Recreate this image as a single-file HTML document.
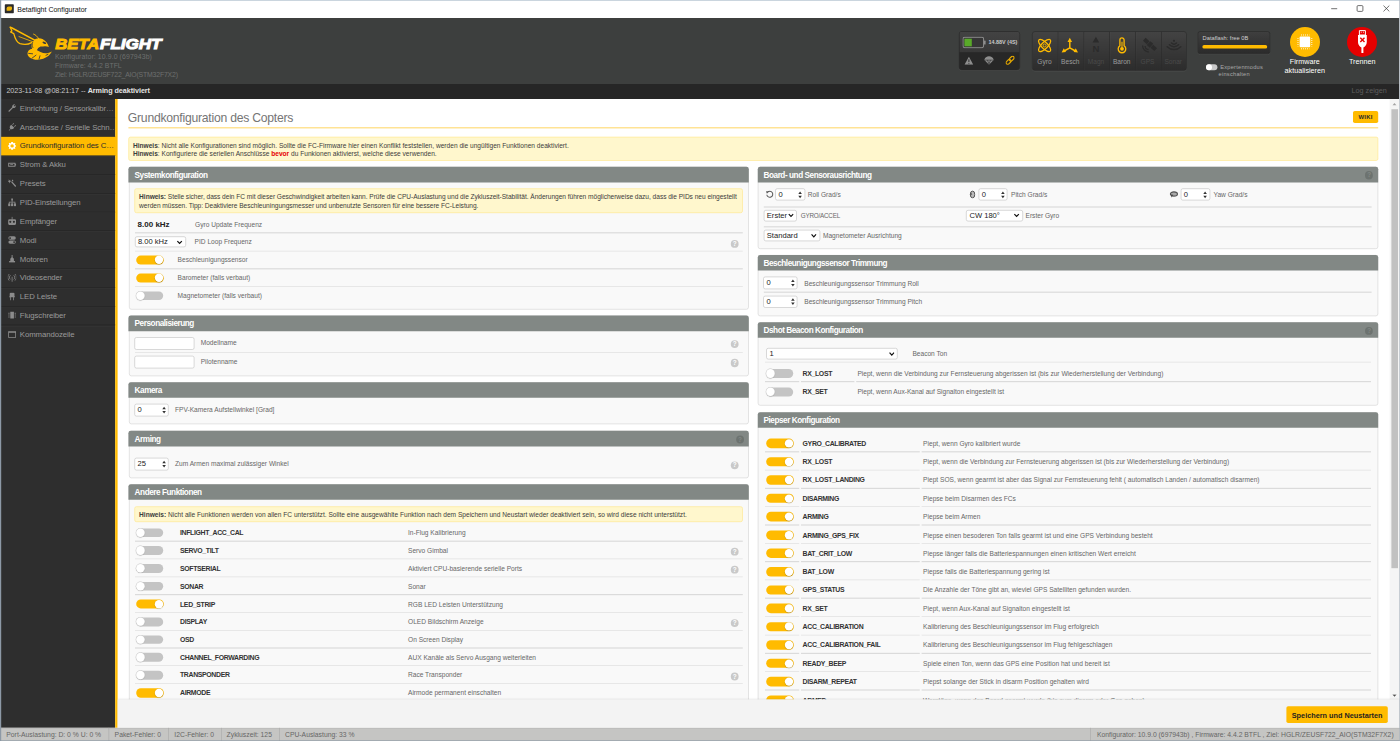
<!DOCTYPE html>
<html lang="de"><head><meta charset="utf-8"><title>Betaflight Configurator</title>
<style>
body{margin:0;background:#fff;overflow:hidden;width:1400px;height:741px;position:relative}
#w{position:absolute;left:0;top:0;width:2333.333px;height:1235px;transform:scale(.6);transform-origin:0 0;font-family:"Liberation Sans",sans-serif;overflow:hidden;background:#fff;font-size:12px;color:#3f3f3f}
#w *{box-sizing:border-box}
#w div,#w span,#w i,#w svg,#w p{position:absolute;margin:0;padding:0;white-space:nowrap}
#w b{font-weight:bold}
/* window frame */
#tb{left:0;top:0;width:2333.333px;height:30px;background:#fff}
#tb .edge{left:0;top:0;width:2333.333px;height:1.333px;background:#a7b9c8}
#tb .ico{left:8.333px;top:7.333px;width:14.333px;height:14.333px;background:#2b2b2b;border-radius:1.333px}
#tb .ico i{left:2.667px;top:3.333px;width:9px;height:7px;background:#e9b20c;border-radius:3.333px 1.667px 3.333px 1px}
#tb .cap{left:28.833px;top:7.667px;font-size:11.667px;line-height:15px;color:#111}
#tb svg{top:0;height:30px;width:33.333px}
#lb,#rb{top:0;width:1.667px;height:1235px;background:#8d99a6}
#lb{left:0;width:1.5px}#rb{left:2331.5px;width:1.833px}
#bb{left:0;top:1233.833px;width:2333.333px;height:1.167px;background:#8d99a6}
/* header */
#hd{left:1.333px;top:30px;width:2331px;height:110px;background:#3d3f3e}
#logo{left:14px;top:13.667px;width:73.333px;height:58.333px}
#brand{left:88.333px;top:26.667px;width:186.667px;height:33.333px}
.inf{left:90.333px;font-size:11.5px;line-height:15px;color:#6d6f6e}
#log{left:1.333px;top:140px;width:2331px;height:25px;background:#262626;color:#c8c8c8;font-size:12px}
#log .l{letter-spacing:-0.083px;left:9.333px;top:4px;line-height:15px}
#log .l b{color:#e4e4e4}
#log .r{right:21px;top:4px;line-height:15px;color:#5d5d5d}
.qs{left:1596.667px;top:22.333px;width:102.333px;height:64.333px;border-radius:5px;background:#272727;box-shadow:0 1px 0 rgba(92,92,92,.5);overflow:hidden;border:1px solid #2c2c2c}
.qs .top{left:0;top:0;width:103.333px;height:34px;background:linear-gradient(#434343,#383838)}
.qs .v{left:48.667px;top:11.333px;font-size:9px;line-height:11.667px;color:#c9c9c9;font-weight:bold}
.ss{left:1718.667px;top:22.333px;width:258.333px;height:66px;border-radius:5px;background:linear-gradient(#434343,#2c2c2c);box-shadow:0 1px 0 rgba(92,92,92,.5);border:1px solid #2a2a2a;overflow:hidden}
.ss .c{top:0;width:42.917px;height:65px;border-right:1.167px solid #2b2b2b;box-shadow:inset 1px 0 0 rgba(255,255,255,.04)}
.ss .c span{left:-1px;width:41.667px;text-align:center;top:43.667px;font-size:11px;line-height:13.333px;color:#9c9c9c}
.ss .c.off span{color:#4a4a4a}
.ss .c svg{left:-1px;top:-1px;width:42.917px;height:40px}
.df{left:1995px;top:22px;width:121px;height:37.667px;border-radius:4.333px;background:linear-gradient(#3f3f3f,#2b2b2b);border:1px solid #272727;box-shadow:0 1px 0 rgba(92,92,92,.5)}
.df span{left:7px;top:4.333px;font-size:9.5px;line-height:11.667px;color:#d0d0d0}
.df i{left:6.5px;top:22.167px;width:108.333px;height:5.667px;border-radius:2.833px;background:#ffbb00}
.ex{left:2008.333px;top:77px;width:19px;height:10px;border-radius:5px;background:#c9c9c9}
.ex i{left:0;top:0;width:10px;height:10px;border-radius:50%;background:#fff}
.ext{letter-spacing:0.367px;font-size:9.5px;line-height:11.667px;color:#a9a9a9}
.cb{width:50px;height:50px;border-radius:50%;top:14.5px}
.cbt{font-size:12px;line-height:15px;color:#fff;text-align:center;width:133.333px}
/* sidebar */
#sb{left:1.333px;top:165px;width:191px;height:1048.333px;background:#2e2e2e}
#sb .t{left:0;width:191.667px;height:31.417px;border-bottom:1.167px solid #242424;box-shadow:inset 0 1px 0 rgba(255,255,255,.04);color:#9a9a9a;font-size:13px}
#sb .t span{letter-spacing:-0.167px;left:31.667px;top:7.167px;line-height:16.667px}
#sb .t svg{left:11.667px;top:7.333px;width:14.333px;height:14.333px;fill:#8c8c8c;stroke:none}
#sb .t.a{background:#ffbb00;color:#2b2b2b;box-shadow:none;border-bottom-color:#2a2a2a}
#sb .t.a svg{fill:#fff}
#sb .t:last-child{border-bottom-color:transparent}
#ys{left:191.833px;top:165px;width:4.167px;height:1048.333px;background:#ffbb00}
/* content */
#content{left:0;top:0;width:2333.333px;height:1165.667px;overflow:hidden}
.ttl{left:213px;top:184.333px;font-size:20.333px;letter-spacing:-0.417px;line-height:25px;color:#757575}
.ttlu{left:213.667px;top:211.833px;width:2083.333px;height:2.167px;background:#ffdc7c}
.wiki{left:2254.833px;top:185.167px;width:42px;height:19.667px;border-radius:3px;background:#ffbb00;color:#2a2a2a;font-weight:bold;font-size:9.833px;line-height:19.667px;text-align:center;letter-spacing:0.417px}
.note{background:#fff7cd;border:1.167px solid #ffe588;border-radius:3.333px;font-size:11px;color:#3c3c3c}
.note p{left:7px;line-height:14.333px}
.note p:nth-child(1){top:5.667px}.note p:nth-child(2){top:20.167px}
.red{color:#e60000}
.gb{background:#f9f9f9;border:1.167px solid #d2d2d2;border-radius:4px}
.gt{left:-1.167px;top:-1.167px;right:-1.167px;height:26px;border-radius:4px 4px 0 0;background:#828885;color:#fff;font-weight:bold;font-size:13.667px;letter-spacing:-0.75px;line-height:27px;padding-left:10px !important}
.sp{height:1.5px;background:#dbdbdb}
.lb{font-size:11px;line-height:20px;color:#676767}
.lb.bd{font-size:11.5px;font-weight:bold;color:#333;letter-spacing:-0.567px}
.lb.sm{font-size:10.5px;letter-spacing:-0.333px}
.khz{font-size:13.333px;font-weight:bold;line-height:20px;color:#222}
.tg{width:46px;height:15.667px;border-radius:7.833px}
.tg.on{background:#ffbb00}
.tg.off{background:#c4c4c4;width:45px;height:14.667px;margin-top:0.5px !important}
.tg i{top:0.833px;width:14px;height:14px;border-radius:50%;background:#fff;box-shadow:0 0.667px 1.667px rgba(0,0,0,.35)}
.tg.on i{right:0.833px}
.tg.off i{left:0.167px;top:0.167px;width:14.333px;height:14.333px;box-shadow:0 0 0 0.833px #c9c9c9,0 0.833px 1.667px rgba(0,0,0,.3)}
.hp{width:13.333px;height:13.333px;border-radius:50%;background:#c9c9c9;color:#fff;font-weight:bold;font-size:10.667px;line-height:13.667px;text-align:center}
.hp.dk{background:#6d7370;color:#838986}
.num,.sel,.txt{background:#fff;border:1.167px solid #bfbfbf;border-radius:3.333px}
#w .num b,#w .sel b{position:absolute;font-weight:normal;font-size:12.667px;color:#222;left:4.333px;top:0;line-height:100%;height:100%;display:flex;align-items:center}
.num svg{right:2.333px;top:50%;margin-top:-7.667px !important;width:9px;height:15.333px;fill:#333}
.sel svg{right:4px;top:50%;margin-top:-3.667px !important;width:10.667px;height:8px;fill:none;stroke:#111;stroke-width:1.5}
/* footer */
#tbar{left:196px;top:1165.667px;width:2136.667px;height:47.667px;background:#f3f3f3;box-shadow:0 -1px 3.333px rgba(0,0,0,.1)}
#save{left:1948px;top:11.5px;width:169.167px;height:27.833px;border-radius:3px;background:#ffbb00;color:#1f1f1f;font-weight:bold;font-size:12.167px;line-height:30px;text-align:center}
#st{left:0;top:1213.333px;width:2333.333px;height:21.667px;background:#c5c5c3;color:#666;font-size:11.333px;box-shadow:inset 0 1px 0 #b5b5b5}
#st span{top:4.333px;line-height:15px}
#st i{top:0;width:1.167px;height:21.667px;background:#a9a9a9}
#scr{left:2316.167px;top:165px;width:15.833px;height:1000.667px;background:#f5f5f5}
#scr i{left:2.5px;top:16.667px;width:11.667px;height:765px;background:#c1c1c1}
#scr svg{left:4.167px;width:8.333px;height:5px}

</style></head>
<body>
<div id="w">
<div id="tb"><i class="edge"></i><span class="ico"><i></i></span><span class="cap">Betaflight Configurator</span>
<svg style="left:2206.667px" viewBox="0 0 20 18"><path d="M7 8.7H13" stroke="#333" stroke-width=".7"/></svg>
<svg style="left:2250px" viewBox="0 0 20 18"><rect x="7.1" y="5.6" width="5.8" height="5.8" rx="1" fill="none" stroke="#333" stroke-width=".7"/></svg>
<svg style="left:2293.833px" viewBox="0 0 20 18"><path d="M7.1 5.6L12.9 11.4M12.9 5.6L7.1 11.4" stroke="#333" stroke-width=".7"/></svg>
</div>
<div id="hd">
<svg id="logo" viewBox="0 0 44 35"><g fill="none" stroke="#ffbb00" stroke-linecap="round" stroke-linejoin="round"><path d="M1.2 0.6 L26.6 14.3" stroke-width="1.5"/><path d="M1.2 .6 L2.9 4.6 L1.6 5.6 L4.8 7.2 C6 12 8 16 11 17.2 C14.5 18.2 19.5 18 22.6 16.2" stroke-width="1.3"/><path d="M10 10.2 L24 15.4" stroke-width=".8"/><path d="M29.6 12.2 C28.2 9.8 26.6 8.5 24.6 7.7" stroke-width=".9"/></g>
<g fill="#ffbb00"><path d="M25 14.2 C26.5 11.7 30.5 11.2 33.5 12.7 C36.5 14.2 39 17.2 39.9 20.5 C37.5 19.4 34.5 19.8 31.5 20.2 C28.5 21.7 27 23.2 26 24.8 L22.8 21.8 C22 18.4 23 15.8 25 14.2Z"/><path d="M22 22.7 C25.5 22.2 28.5 23.7 31.5 25.7 C35.5 27.7 39.5 27.2 42.8 25.2 C41 29.2 36.5 32.7 29.5 33.4 C23.5 33.8 19 31.2 18.5 27.7 C18.3 25.2 20 23.2 22 22.7Z"/></g>
<path d="M23 20.500 C25 19.500 27.500 20 29 21.500 L27.500 24.500 L23.500 23.500Z" fill="#ffbb00"/><g stroke="#3d3f3e" stroke-width=".9" fill="none" stroke-linecap="round"><path d="M19.6 27 L23.6 27.4"/><path d="M23 31.8 L27 28.8"/><path d="M30 32.8 L31 29.4"/><path d="M37 28.9 L39 27.9"/><path d="M23.6 16.2 C22.9 18 23.1 19.8 23.9 21.2" stroke-width=".8"/></g>
<ellipse cx="35.3" cy="16.4" rx="2" ry=".95" transform="rotate(25 35.3 16.4)" fill="#3d3f3e"/></svg>
<svg id="brand" viewBox="0 0 112 20"><text x="1.2" y="15.2" font-family="Liberation Sans, sans-serif" font-weight="bold" font-style="italic" font-size="15.2" fill="#ffbb00" stroke="#ffbb00" stroke-width="1" textLength="44" lengthAdjust="spacingAndGlyphs">BETA</text><text x="46" y="15.2" font-family="Liberation Sans, sans-serif" font-weight="bold" font-style="italic" font-size="15.2" fill="#fff" stroke="#fff" stroke-width="1" textLength="61.5" lengthAdjust="spacingAndGlyphs">FLIGHT</text></svg>
<span class="inf" style="top:57.167px;letter-spacing:0.167px">Konfigurator: 10.9.0 (697943b)</span>
<span class="inf" style="top:72px">Firmware: 4.4.2 BTFL</span>
<span class="inf" style="top:87.167px;letter-spacing:-0.317px">Ziel: HGLR/ZEUSF722_AIO(STM32F7X2)</span>
<div class="qs"><i class="top"></i>
<svg style="left:5.333px;top:7.667px;width:40px;height:20px" viewBox="0 0 24 12"><rect x=".6" y=".7" width="20.6" height="10.4" rx="1.6" fill="#363636" stroke="#8f8f8f" stroke-width="1"/><rect x="21.6" y="4" width="1.6" height="4" rx=".6" fill="#8f8f8f"/><rect x="2" y="2.1" width="7.4" height="7.6" fill="#59aa29"/></svg>
<span class="v">14.88V (4S)</span>
<svg style="left:7.667px;top:40.333px;width:15.667px;height:14.333px" viewBox="0 0 10 9"><path d="M5 .3 L9.7 8.7 H.3Z" fill="#8e8e8e"/><path d="M5 3V6M5 7V7.8" stroke="#272727" stroke-width="1"/></svg>
<svg style="left:41.333px;top:39.333px;width:16.667px;height:15.667px" viewBox="0 0 10.4 9.6"><path d="M.4 4.2 C.8 1.6 2.8 .4 5.2 .4 C7.6 .4 9.6 1.6 10 4.2 L5.2 9.3Z" fill="#8e8e8e"/><path d="M1.2 4.4 H9.2 M3.6 4.4 L5.2 8.4 L6.8 4.4" stroke="#272727" stroke-width=".6" fill="none"/></svg>
<svg style="left:77.333px;top:40px;width:15px;height:15px" viewBox="0 0 10 10"><g fill="none" stroke="#e3a700" stroke-width="1.35" transform="rotate(-45 5 5)"><rect x="-.6" y="3.2" width="6.2" height="3.6" rx="1.8"/><rect x="4.4" y="3.2" width="6.2" height="3.6" rx="1.8"/></g></svg>
</div>
<div class="ss">
<div class="c" style="left:0"><svg viewBox="0 0 25.75 24"><g fill="none" stroke="#ffbb00" stroke-width="1.3"><ellipse cx="12.600" cy="14.300" rx="8" ry="3.100" transform="rotate(45 12.600 14.300)"/><ellipse cx="12.600" cy="14.300" rx="8" ry="3.100" transform="rotate(-45 12.600 14.300)"/><circle cx="12.600" cy="14.300" r="1.500" stroke-width=".9"/></g></svg><span>Gyro</span></div>
<div class="c" style="left:42.917px"><svg viewBox="0 0 25.75 24"><path d="M12 16.600 V10 M12 16.600 L6.400 19.800 M12 16.600 L17.600 19.800" fill="none" stroke="#ffbb00" stroke-width="1.500"/><path d="M12 6.600 L14.300 10.800 H9.700Z M3.800 21.300 L6 17 L8.200 20.900Z M20.200 21.300 L18 17 L15.800 20.900Z" fill="#ffbb00"/></svg><span>Besch</span></div>
<div class="c off" style="left:85.833px"><svg viewBox="0 0 25.75 24"><path d="M12.300 5.600 L15.600 11.400 H9Z" fill="#2b2b2b"/><text x="12.400" y="21.200" text-anchor="middle" font-family="Liberation Sans, sans-serif" font-weight="bold" font-size="9.600" fill="#2b2b2b">N</text></svg><span>Magn</span></div>
<div class="c" style="left:128.75px"><svg viewBox="0 0 25.75 24"><path d="M10.500 8.800 A2.100 2.100 0 0 1 14.700 8.800 V14.600 A3.800 3.800 0 1 1 10.500 14.600Z" fill="none" stroke="#ffbb00" stroke-width="1.300"/><circle cx="12.600" cy="17.600" r="1.900" fill="#ffbb00"/><path d="M12.600 17V10.500" stroke="#ffbb00" stroke-width="1.100"/></svg><span>Baron</span></div>
<div class="c off" style="left:171.667px"><svg viewBox="0 0 25.75 24"><g fill="#2b2b2b" transform="rotate(42 14.500 13)"><rect x="7.200" y="11" width="5.200" height="4"/><rect x="12.900" y="10.400" width="4" height="5.200"/><rect x="17.400" y="11" width="5.200" height="4"/></g><g fill="none" stroke="#2b2b2b" stroke-width="1.300"><path d="M7.400 14.400 A6.400 6.400 0 0 0 13.600 20.800"/><path d="M9.900 14.800 A3.800 3.800 0 0 0 13.400 18.400"/></g></svg><span>GPS</span></div>
<div class="c off" style="left:214.583px;border-right:0"><svg viewBox="0 0 25.75 24"><g fill="none" stroke="#2b2b2b" stroke-width="1.500" stroke-linecap="round"><path d="M6.200 15.600 A9.600 9.600 0 0 0 19.800 15.600"/><path d="M8.400 13.600 A6.500 6.500 0 0 0 17.600 13.600"/><path d="M10.500 11.800 A3.600 3.600 0 0 0 15.500 11.800"/></g><circle cx="13" cy="9.600" r="1.100" fill="#2b2b2b"/></svg><span>Sonar</span></div>
</div>
<div class="df"><span>Dataflash: free 0B</span><i></i></div>
<span class="ex"><i></i></span>
<span class="ext" style="left:2032.333px;top:75.667px">Expertenmodus</span>
<span class="ext" style="left:2029.667px;top:87.333px">einschalten</span>
<span class="cb" style="left:2148.333px;background:#ffbb00"></span>
<svg style="left:2157.667px;top:23.667px;width:31.667px;height:31.667px" viewBox="0 0 19 19"><rect x="4.200" y="4.200" width="10.600" height="10.600" rx="1" fill="#fff"/><g stroke="#fff" stroke-width="1" stroke-dasharray=".9 1.1"><path d="M5.600 2.600H14 M5.600 16.400H14 M2.600 5.600V14 M16.400 5.600V14"/></g></svg>
<span class="cbt" style="left:2106.667px;top:65.333px">Firmware</span><span class="cbt" style="left:2106.667px;top:80.333px">aktualisieren</span>
<span class="cb" style="left:2244px;background:#e60000"></span>
<svg style="left:2257.333px;top:19.333px;width:23.333px;height:41.667px" viewBox="0 0 14 25"><path d="M4 1.200H10V5.600H4Z" fill="none" stroke="#fff" stroke-width="1"/><path d="M2.600 5.600H11.400V12.600C11.400 15.600 9.600 17.200 8 18V23.600H6V18C4.400 17.200 2.600 15.600 2.600 12.600Z" fill="#fff"/><path d="M4.900 8.300L9.100 12.500M9.100 8.300L4.900 12.500" stroke="#e60000" stroke-width="1.4"/><path d="M5.400 2.800H6.400M7.600 2.800H8.600" stroke="#fff" stroke-width=".8"/></svg>
<span class="cbt" style="left:2202.333px;top:65.333px">Trennen</span>
</div>
<div id="log"><span class="l">2023-11-08 @08:21:17 -- <b>Arming deaktiviert</b></span><span class="r">Log zeigen</span></div>

<div id="sb">
<div class="t" style="top:0.5px"><svg viewBox="0 0 9 9"><path d="M.8 7.400 L4.600 3.600 A2.400 2.400 0 0 1 7.600 .7 L6.200 2.100 L6.900 2.800 L8.300 1.400 A2.400 2.400 0 0 1 5.400 4.400 L1.600 8.200 A.57 .57 0 0 1 .8 7.400Z"/></svg><span>Einrichtung / Sensorkalibr…</span></div>
<div class="t" style="top:31.917px"><svg viewBox="0 0 9 9"><path d="M1 8.400 L2.600 6.400 C1.600 5.200 2 4 2.800 3.200 L3.600 2.400 L6.800 5.600 L6 6.400 C5 7.400 3.800 7.400 3 6.800 L1.400 8.800Z M4.600 2.200 L6 .6 L6.600 1.200 L5.200 2.800Z M6.600 4.200 L8 2.600 L8.600 3.200 L7.200 4.800Z"/></svg><span>Anschlüsse / Serielle Schn…</span></div>
<div class="t a" style="top:63.333px"><svg viewBox="0 0 9 9"><path fill-rule="evenodd" d="M4.500 .3 L5.400 .400 L5.700 1.400 L6.500 1.800 L7.400 1.300 L8 2 L7.500 2.900 L7.800 3.700 L8.800 4 V5 L7.800 5.300 L7.500 6.100 L8 7 L7.400 7.700 L6.500 7.200 L5.700 7.600 L5.400 8.600 H3.600 L3.300 7.600 L2.500 7.200 L1.600 7.700 L1 7 L1.500 6.100 L1.200 5.300 L.2 5 V4 L1.200 3.700 L1.500 2.900 L1 2 L1.600 1.300 L2.500 1.800 L3.300 1.400 L3.600 .4Z M4.500 2.700 A1.800 1.800 0 1 0 4.500 6.300 A1.800 1.800 0 1 0 4.500 2.700Z"/></svg><span>Grundkonfiguration des C…</span></div>
<div class="t" style="top:94.75px"><svg viewBox="0 0 9 9"><path fill-rule="evenodd" d="M.4 2.600 H8 V3.800 H8.800 V5.600 H8 V6.800 H.4Z M1.400 3.600 V5.800 H7 V3.600Z M2.600 4.300 H5.400 V5.100 H2.600Z"/></svg><span>Strom & Akku</span></div>
<div class="t" style="top:126.167px"><svg viewBox="0 0 9 9"><path d="M3.400 3.400 L4.400 2.600 L8.800 7.600 L7.800 8.600Z M1 .6 L1.800 1.800 L3 1 L2.400 2.400 L3.600 3.200 L2.200 3.400 L1.800 4.800 L1.200 3.400 L0 3.400 L.9 2.500Z M5 .4 L5.400 1.200 L6.200 1.400 L5.500 1.900 L5.600 2.700 L5 2.200 L4.200 2.600 L4.500 1.800 L4 1.200 L4.800 1.200Z"/></svg><span>Presets</span></div>
<div class="t" style="top:157.583px"><svg viewBox="0 0 9 9"><path d="M3.600 .4 H5.400 V2.600 H4.900 V3.900 H7.900 V5.800 H8.600 V8.600 H6.400 V5.800 H7.100 V4.700 H4.900 V5.800 H5.600 V8.600 H3.400 V5.800 H4.100 V4.700 H1.900 V5.800 H2.600 V8.600 H.4 V5.800 H1.100 V3.900 H4.100 V2.600 H3.600Z"/></svg><span>PID-Einstellungen</span></div>
<div class="t" style="top:189px"><svg viewBox="0 0 9 9"><path fill-rule="evenodd" d="M4.100 .2 H4.900 V2.800 H7.400 A1.200 1.200 0 0 1 8.600 4 V7.600 A1.200 1.200 0 0 1 7.400 8.800 H1.600 A1.200 1.200 0 0 1 .4 7.600 V4 A1.200 1.200 0 0 1 1.600 2.800 H4.100Z M2.600 4.400 A1.100 1.100 0 1 0 2.600 6.600 A1.100 1.100 0 1 0 2.600 4.400Z M6.400 4.400 A1.100 1.100 0 1 0 6.400 6.600 A1.100 1.100 0 1 0 6.400 4.400Z"/></svg><span>Empfänger</span></div>
<div class="t" style="top:220.417px"><svg viewBox="0 0 9 9"><path fill-rule="evenodd" d="M2.400 .6 H6.600 A1.800 1.800 0 0 1 6.600 4.200 H2.400 A1.800 1.800 0 0 1 2.400 .6Z M2.400 1.400 A1 1 0 1 0 2.400 3.400 A1 1 0 1 0 2.400 1.400Z M2.400 4.800 H6.600 A1.800 1.800 0 0 1 6.600 8.400 H2.400 A1.800 1.800 0 0 1 2.400 4.800Z M6.600 5.600 A1 1 0 1 0 6.600 7.600 A1 1 0 1 0 6.600 5.600Z"/></svg><span>Modi</span></div>
<div class="t" style="top:251.833px"><svg viewBox="0 0 9 9"><path d="M4 .6 H5 V3 L6.400 4.600 V7 H7.600 V8.600 H1.400 V7 H2.600 V4.600 L4 3Z"/></svg><span>Motoren</span></div>
<div class="t" style="top:283.25px"><svg viewBox="0 0 9 9"><path d="M4.100 3.400 H4.900 V8.600 H4.100Z" /><path d="M2.800 1.800 A2.600 2.600 0 0 0 2.800 6 M6.200 1.800 A2.600 2.600 0 0 1 6.200 6 M1.400 .6 A4.400 4.400 0 0 0 1.400 7.200 M7.600 .6 A4.400 4.400 0 0 1 7.600 7.200" fill="none" stroke="#9a9a9a" stroke-width=".8"/></svg><span>Videosender</span></div>
<div class="t" style="top:314.667px"><svg viewBox="0 0 9 9"><path d="M3 .6 H6 A1 1 0 0 1 7 1.600 V4.400 H7.600 V5.400 H6.400 V8.600 H5.600 V5.400 H3.400 V8.600 H2.600 V5.400 H1.400 V4.400 H2 V1.600 A1 1 0 0 1 3 .6Z"/></svg><span>LED Leiste</span></div>
<div class="t" style="top:346.083px"><svg viewBox="0 0 9 9"><path d="M2.600 1 H6.400 V8 H2.600Z M.6 2 H1.800 V3 H.6Z M.6 4 H1.800 V5 H.6Z M.6 6 H1.800 V7 H.6Z M7.200 2 H8.400 V3 H7.200Z M7.200 4 H8.400 V5 H7.200Z M7.200 6 H8.400 V7 H7.200Z"/></svg><span>Flugschreiber</span></div>
<div class="t" style="top:377.5px"><svg viewBox="0 0 9 9"><path fill-rule="evenodd" d="M.4 1.200 H8.600 V8 H.4Z M1.200 3 V7.200 H7.800 V3Z"/></svg><span>Kommandozeile</span></div>
</div><i id="ys"></i>
<div id="content">
<div class="ttl">Grundkonfiguration des Copters</div><i class="ttlu"></i><span class="wiki">WIKI</span>
<div class="note" style="left:213.5px;top:228.167px;width:2083.333px;height:39.667px"><p><b>Hinweis</b>: Nicht alle Konfigurationen sind möglich. Sollte die FC-Firmware hier einen Konflikt feststellen, werden die ungültigen Funktionen deaktiviert.</p><p><b>Hinweis</b>: Konfiguriere die seriellen Anschlüsse <b class="red">bevor</b> du Funkionen aktivierst, welche diese verwenden.</p></div>
<div class="gb" style="left:214.5px;top:277.833px;width:1033.667px;height:237.833px"><div class="gt">Systemkonfiguration</div></div>
<div class="note" style="left:223.833px;top:314px;width:1014.333px;height:40.5px;letter-spacing:-0.057px"><p><b>Hinweis:</b> Stelle sicher, dass dein FC mit dieser Geschwindigkeit arbeiten kann. Prüfe die CPU-Auslastung und die Zykluszeit-Stabilität. Änderungen führen möglicherweise dazu, dass die PIDs neu eingestellt</p><p>werden müssen. Tipp: Deaktiviere Beschleuningungsmesser und unbenutzte Sensoren für eine bessere FC-Leistung.</p></div><span class="khz" style="left:229.333px;top:363.833px">8.00 kHz</span><span class="lb" style="left:325px;top:363.833px">Gyro Update Frequenz</span><i class="sp" style="left:224.5px;width:1013.667px;top:387.333px"></i><span class="sel" style="left:224.5px;top:394px;width:85px;height:18.333px"><b>8.00 kHz</b><svg viewBox="0 0 8 6"><path d="M1.2 1.3 L4 4.3 L6.8 1.3" /></svg></span><span class="lb" style="left:324.333px;top:393.333px">PID Loop Frequenz</span><span class="hp " style="left:1217.833px;top:400px">?</span><i class="sp" style="left:224.5px;width:1013.667px;top:417.5px"></i><span class="tg on" style="left:226.833px;top:425.5px"><i></i></span><span class="lb" style="left:296px;top:423.333px">Beschleunigungssensor</span><i class="sp" style="left:224.5px;width:1013.667px;top:447.333px"></i><span class="tg on" style="left:226.833px;top:455.5px"><i></i></span><span class="lb" style="left:296px;top:453.333px">Barometer (falls verbaut)</span><i class="sp" style="left:224.5px;width:1013.667px;top:476.5px"></i><span class="tg off" style="left:226.833px;top:485px"><i></i></span><span class="lb" style="left:296px;top:482.833px">Magnetometer (falls verbaut)</span>
<div class="gb" style="left:214.5px;top:525.667px;width:1033.667px;height:101.167px"><div class="gt">Personalisierung</div></div>
<span class="txt" style="left:223.833px;top:561.833px;width:100.667px;height:20.833px"></span><span class="lb" style="left:334.5px;top:561px">Modellname</span><span class="hp " style="left:1217.833px;top:566.667px">?</span><i class="sp" style="left:224.5px;width:1013.667px;top:586.5px"></i><span class="txt" style="left:223.833px;top:593.333px;width:100.667px;height:20.5px"></span><span class="lb" style="left:334.5px;top:592.333px">Pilotenname</span><span class="hp " style="left:1217.833px;top:598.333px">?</span>
<div class="gb" style="left:214.5px;top:637.167px;width:1033.667px;height:70.167px"><div class="gt">Kamera</div></div>
<span class="num" style="left:223.833px;top:673.333px;width:57.167px;height:20.667px"><b>0</b><svg viewBox="0 0 6 10"><path d="M1 4 L3 1.2 L5 4Z M1 6 L3 8.8 L5 6Z"/></svg></span><span class="lb" style="left:291.667px;top:673.333px">FPV-Kamera Aufstellwinkel [Grad]</span>
<div class="gb" style="left:214.5px;top:718px;width:1033.667px;height:79px"><div class="gt">Arming</div><span class="hp dk" style="right:7.333px;top:6.5px">?</span></div>
<span class="num" style="left:223.833px;top:763.167px;width:57.167px;height:20.667px"><b>25</b><svg viewBox="0 0 6 10"><path d="M1 4 L3 1.2 L5 4Z M1 6 L3 8.8 L5 6Z"/></svg></span><span class="lb" style="left:291.667px;top:762.667px">Zum Armen maximal zulässiger Winkel</span><span class="hp " style="left:1217.833px;top:769.167px">?</span>
<div class="gb" style="left:214.5px;top:807.333px;width:1033.667px;height:434px"><div class="gt">Andere Funktionen</div></div>
<div class="note" style="left:223.833px;top:843.5px;width:1014.333px;height:26px"><p><b>Hinweis:</b> Nicht alle Funktionen werden von allen FC unterstützt. Sollte eine ausgewählte Funktion nach dem Speichern und Neustart wieder deaktiviert sein, so wird diese nicht unterstützt.</p></div><span class="tg off" style="left:226.833px;top:880.167px"><i></i></span><span class="lb bd" style="left:300px;top:878px">INFLIGHT_ACC_CAL</span><span class="lb" style="left:680px;top:878px">In-Flug Kalibrierung</span><i class="sp" style="left:224.5px;width:1013.667px;top:901.167px"></i><span class="tg off" style="left:226.833px;top:909.833px"><i></i></span><span class="lb bd" style="left:300px;top:907.667px">SERVO_TILT</span><span class="lb" style="left:680px;top:907.667px">Servo Gimbal</span><span class="hp " style="left:1217.833px;top:913.167px">?</span><i class="sp" style="left:224.5px;width:1013.667px;top:930.833px"></i><span class="tg off" style="left:226.833px;top:939.5px"><i></i></span><span class="lb bd" style="left:300px;top:937.333px">SOFTSERIAL</span><span class="lb" style="left:680px;top:937.333px">Aktiviert CPU-basierende serielle Ports</span><span class="hp " style="left:1217.833px;top:942.833px">?</span><i class="sp" style="left:224.5px;width:1013.667px;top:960.5px"></i><span class="tg off" style="left:226.833px;top:969.167px"><i></i></span><span class="lb bd" style="left:300px;top:967px">SONAR</span><span class="lb" style="left:680px;top:967px">Sonar</span><i class="sp" style="left:224.5px;width:1013.667px;top:990.167px"></i><span class="tg on" style="left:226.833px;top:998.833px"><i></i></span><span class="lb bd" style="left:300px;top:996.667px">LED_STRIP</span><span class="lb" style="left:680px;top:996.667px">RGB LED Leisten Unterstützung</span><i class="sp" style="left:224.5px;width:1013.667px;top:1019.833px"></i><span class="tg off" style="left:226.833px;top:1028.5px"><i></i></span><span class="lb bd" style="left:300px;top:1026.333px">DISPLAY</span><span class="lb" style="left:680px;top:1026.333px">OLED Bildschirm Anzeige</span><span class="hp " style="left:1217.833px;top:1031.833px">?</span><i class="sp" style="left:224.5px;width:1013.667px;top:1049.5px"></i><span class="tg off" style="left:226.833px;top:1058.167px"><i></i></span><span class="lb bd" style="left:300px;top:1056px">OSD</span><span class="lb" style="left:680px;top:1056px">On Screen Display</span><i class="sp" style="left:224.5px;width:1013.667px;top:1079.167px"></i><span class="tg off" style="left:226.833px;top:1087.833px"><i></i></span><span class="lb bd" style="left:300px;top:1085.667px">CHANNEL_FORWARDING</span><span class="lb" style="left:680px;top:1085.667px">AUX Kanäle als Servo Ausgang weiterleiten</span><i class="sp" style="left:224.5px;width:1013.667px;top:1108.833px"></i><span class="tg off" style="left:226.833px;top:1117.5px"><i></i></span><span class="lb bd" style="left:300px;top:1115.333px">TRANSPONDER</span><span class="lb" style="left:680px;top:1115.333px">Race Transponder</span><span class="hp " style="left:1217.833px;top:1120.833px">?</span><i class="sp" style="left:224.5px;width:1013.667px;top:1138.5px"></i><span class="tg on" style="left:226.833px;top:1147.167px"><i></i></span><span class="lb bd" style="left:300px;top:1145px">AIRMODE</span><span class="lb" style="left:680px;top:1145px">Airmode permanent einschalten</span><i class="sp" style="left:224.5px;width:1013.667px;top:1168.167px"></i><span class="tg on" style="left:226.833px;top:1176.833px"><i></i></span><span class="lb bd" style="left:300px;top:1174.667px">ANTI_GRAVITY</span><span class="lb" style="left:680px;top:1174.667px">Temporäre Erhöhung des I-Anteils bei starken Gasänderungen</span><i class="sp" style="left:224.5px;width:1013.667px;top:1197.833px"></i>
<div class="gb" style="left:1262.667px;top:277.833px;width:1034.167px;height:137.167px"><div class="gt">Board- und Sensorausrichtung</div><span class="hp dk" style="right:7.333px;top:6.5px">?</span></div>
<svg class="ic" style="left:1275.5px;top:317.167px;width:14px;height:14px" viewBox="0 0 14 14"><path d="M3.2 3.4 A5 5 0 1 1 2 7.6" fill="none" stroke="#555" stroke-width="1.7"/><path d="M0.6 1.6 L5.4 2 L2.2 5.8Z" fill="#555"/></svg><span class="num" style="left:1292.167px;top:314.333px;width:49.5px;height:20.167px"><b>0</b><svg viewBox="0 0 6 10"><path d="M1 4 L3 1.2 L5 4Z M1 6 L3 8.8 L5 6Z"/></svg></span><span class="lb" style="left:1346.167px;top:314.167px">Roll Grad/s</span><svg class="ic" style="left:1615px;top:317px;width:11px;height:14.333px" viewBox="0 0 10 14"><ellipse cx="5.4" cy="7" rx="3.6" ry="5.6" fill="#bbb" stroke="#555" stroke-width="1.6"/><path d="M3.2 4.4 L1.2 7.4 L5 7Z" fill="#444"/></svg><span class="num" style="left:1630.833px;top:314.333px;width:48.333px;height:20.167px"><b>0</b><svg viewBox="0 0 6 10"><path d="M1 4 L3 1.2 L5 4Z M1 6 L3 8.8 L5 6Z"/></svg></span><span class="lb" style="left:1685px;top:314.167px">Pitch Grad/s</span><svg class="ic" style="left:1949.333px;top:317.667px;width:15px;height:12.667px" viewBox="0 0 14 12"><ellipse cx="7" cy="5" rx="5.6" ry="3.4" fill="#aaa" stroke="#555" stroke-width="1.8"/><path d="M2 6 L6 6.4 L3.4 10.6Z" fill="#444"/></svg><span class="num" style="left:1967.5px;top:314.333px;width:49.167px;height:20.167px"><b>0</b><svg viewBox="0 0 6 10"><path d="M1 4 L3 1.2 L5 4Z M1 6 L3 8.8 L5 6Z"/></svg></span><span class="lb" style="left:2022.5px;top:314.167px">Yaw Grad/s</span><i class="sp" style="left:1272.667px;width:1013.667px;top:344.333px"></i><span class="sel" style="left:1272.667px;top:349.5px;width:55.833px;height:19px"><b>Erster</b><svg viewBox="0 0 8 6"><path d="M1.2 1.3 L4 4.3 L6.8 1.3" /></svg></span><span class="lb sm" style="left:1334.5px;top:349.167px">GYRO/ACCEL</span><span class="sel" style="left:1610.333px;top:349.5px;width:94.5px;height:19px"><b>CW 180°</b><svg viewBox="0 0 8 6"><path d="M1.2 1.3 L4 4.3 L6.8 1.3" /></svg></span><span class="lb" style="left:1709.167px;top:349.167px">Erster Gyro</span><i class="sp" style="left:1272.667px;width:1013.667px;top:377.333px"></i><span class="sel" style="left:1272.667px;top:382.833px;width:94px;height:19px"><b>Standard</b><svg viewBox="0 0 8 6"><path d="M1.2 1.3 L4 4.3 L6.8 1.3" /></svg></span><span class="lb" style="left:1371.5px;top:382.5px">Magnetometer Ausrichtung</span>
<div class="gb" style="left:1262.667px;top:425.167px;width:1034.167px;height:101.667px"><div class="gt">Beschleunigungssensor Trimmung</div></div>
<span class="num" style="left:1272.167px;top:461.167px;width:57.167px;height:20.5px"><b>0</b><svg viewBox="0 0 6 10"><path d="M1 4 L3 1.2 L5 4Z M1 6 L3 8.8 L5 6Z"/></svg></span><span class="lb" style="left:1340.5px;top:461.5px">Beschleunigungssensor Trimmung Roll</span><i class="sp" style="left:1272.667px;width:1013.667px;top:486px"></i><span class="num" style="left:1272.167px;top:492.833px;width:57.167px;height:20.5px"><b>0</b><svg viewBox="0 0 6 10"><path d="M1 4 L3 1.2 L5 4Z M1 6 L3 8.8 L5 6Z"/></svg></span><span class="lb" style="left:1340.5px;top:492.833px">Beschleunigungssensor Trimmung Pitch</span>
<div class="gb" style="left:1262.667px;top:537.167px;width:1034.167px;height:139.167px"><div class="gt">Dshot Beacon Konfiguration</div><span class="hp dk" style="right:7.333px;top:6.5px">?</span></div>
<span class="sel" style="left:1277.333px;top:579.833px;width:219.167px;height:19px"><b>1</b><svg viewBox="0 0 8 6"><path d="M1.2 1.3 L4 4.3 L6.8 1.3" /></svg></span><span class="lb" style="left:1520.667px;top:579.333px">Beacon Ton</span><i class="sp" style="left:1274.5px;width:1010.5px;top:602.667px"></i><span class="tg off" style="left:1276.833px;top:614.833px"><i></i></span><span class="lb bd" style="left:1337.667px;top:612.667px">RX_LOST</span><span class="lb" style="left:1429px;top:612.667px">Piept, wenn die Verbindung zur Fernsteuerung abgerissen ist (bis zur Wiederherstellung der Verbindung)</span><i class="sp" style="left:1274.5px;width:57.5px;top:635.333px"></i><i class="sp" style="left:1335px;width:88.667px;top:635.333px"></i><i class="sp" style="left:1426.667px;width:858.333px;top:635.333px"></i><span class="tg off" style="left:1276.833px;top:645.5px"><i></i></span><span class="lb bd" style="left:1337.667px;top:643.333px">RX_SET</span><span class="lb" style="left:1429px;top:643.333px">Piept, wenn Aux-Kanal auf Signalton eingestellt ist</span>
<div class="gb" style="left:1262.667px;top:687.167px;width:1034.167px;height:550.667px"><div class="gt">Piepser Konfiguration</div></div>
<span class="tg on" style="left:1276.833px;top:731.167px"><i></i></span><span class="lb bd" style="left:1337.667px;top:729px">GYRO_CALIBRATED</span><span class="lb" style="left:1538.5px;top:729px">Piept, wenn Gyro kalibriert wurde</span><i class="sp" style="left:1274.5px;width:57.667px;top:752px"></i><i class="sp" style="left:1335px;width:197.833px;top:752px"></i><i class="sp" style="left:1536px;width:749px;top:752px"></i><span class="tg on" style="left:1276.833px;top:761.717px"><i></i></span><span class="lb bd" style="left:1337.667px;top:759.55px">RX_LOST</span><span class="lb" style="left:1538.5px;top:759.55px">Piept, wenn die Verbindung zur Fernsteuerung abgerissen ist (bis zur Wiederherstellung der Verbindung)</span><i class="sp" style="left:1274.5px;width:57.667px;top:782.55px"></i><i class="sp" style="left:1335px;width:197.833px;top:782.55px"></i><i class="sp" style="left:1536px;width:749px;top:782.55px"></i><span class="tg on" style="left:1276.833px;top:792.267px"><i></i></span><span class="lb bd" style="left:1337.667px;top:790.1px">RX_LOST_LANDING</span><span class="lb" style="left:1538.5px;top:790.1px">Piept SOS, wenn gearmt ist aber das Signal zur Fernsteuerung fehlt ( automatisch Landen / automatisch disarmen)</span><i class="sp" style="left:1274.5px;width:57.667px;top:813.1px"></i><i class="sp" style="left:1335px;width:197.833px;top:813.1px"></i><i class="sp" style="left:1536px;width:749px;top:813.1px"></i><span class="tg on" style="left:1276.833px;top:822.817px"><i></i></span><span class="lb bd" style="left:1337.667px;top:820.65px">DISARMING</span><span class="lb" style="left:1538.5px;top:820.65px">Piepse beim Disarmen des FCs</span><i class="sp" style="left:1274.5px;width:57.667px;top:843.65px"></i><i class="sp" style="left:1335px;width:197.833px;top:843.65px"></i><i class="sp" style="left:1536px;width:749px;top:843.65px"></i><span class="tg on" style="left:1276.833px;top:853.367px"><i></i></span><span class="lb bd" style="left:1337.667px;top:851.2px">ARMING</span><span class="lb" style="left:1538.5px;top:851.2px">Piepse beim Armen</span><i class="sp" style="left:1274.5px;width:57.667px;top:874.2px"></i><i class="sp" style="left:1335px;width:197.833px;top:874.2px"></i><i class="sp" style="left:1536px;width:749px;top:874.2px"></i><span class="tg on" style="left:1276.833px;top:883.917px"><i></i></span><span class="lb bd" style="left:1337.667px;top:881.75px">ARMING_GPS_FIX</span><span class="lb" style="left:1538.5px;top:881.75px">Piepse einen besoderen Ton falls gearmt ist und eine GPS Verbindung besteht</span><i class="sp" style="left:1274.5px;width:57.667px;top:904.75px"></i><i class="sp" style="left:1335px;width:197.833px;top:904.75px"></i><i class="sp" style="left:1536px;width:749px;top:904.75px"></i><span class="tg on" style="left:1276.833px;top:914.467px"><i></i></span><span class="lb bd" style="left:1337.667px;top:912.3px">BAT_CRIT_LOW</span><span class="lb" style="left:1538.5px;top:912.3px">Piepse länger falls die Batteriespannungen einen kritischen Wert erreicht</span><i class="sp" style="left:1274.5px;width:57.667px;top:935.3px"></i><i class="sp" style="left:1335px;width:197.833px;top:935.3px"></i><i class="sp" style="left:1536px;width:749px;top:935.3px"></i><span class="tg on" style="left:1276.833px;top:945.017px"><i></i></span><span class="lb bd" style="left:1337.667px;top:942.85px">BAT_LOW</span><span class="lb" style="left:1538.5px;top:942.85px">Piepse falls die Batteriespannung gering ist</span><i class="sp" style="left:1274.5px;width:57.667px;top:965.85px"></i><i class="sp" style="left:1335px;width:197.833px;top:965.85px"></i><i class="sp" style="left:1536px;width:749px;top:965.85px"></i><span class="tg on" style="left:1276.833px;top:975.567px"><i></i></span><span class="lb bd" style="left:1337.667px;top:973.4px">GPS_STATUS</span><span class="lb" style="left:1538.5px;top:973.4px">Die Anzahle der Töne gibt an, wieviel GPS Satelliten gefunden wurden.</span><i class="sp" style="left:1274.5px;width:57.667px;top:996.4px"></i><i class="sp" style="left:1335px;width:197.833px;top:996.4px"></i><i class="sp" style="left:1536px;width:749px;top:996.4px"></i><span class="tg on" style="left:1276.833px;top:1006.117px"><i></i></span><span class="lb bd" style="left:1337.667px;top:1003.95px">RX_SET</span><span class="lb" style="left:1538.5px;top:1003.95px">Piept, wenn Aux-Kanal auf Signalton eingestellt ist</span><i class="sp" style="left:1274.5px;width:57.667px;top:1026.95px"></i><i class="sp" style="left:1335px;width:197.833px;top:1026.95px"></i><i class="sp" style="left:1536px;width:749px;top:1026.95px"></i><span class="tg on" style="left:1276.833px;top:1036.667px"><i></i></span><span class="lb bd" style="left:1337.667px;top:1034.5px">ACC_CALIBRATION</span><span class="lb" style="left:1538.5px;top:1034.5px">Kalibrierung des Beschleunigungssensor im Flug erfolgreich</span><i class="sp" style="left:1274.5px;width:57.667px;top:1057.5px"></i><i class="sp" style="left:1335px;width:197.833px;top:1057.5px"></i><i class="sp" style="left:1536px;width:749px;top:1057.5px"></i><span class="tg on" style="left:1276.833px;top:1067.217px"><i></i></span><span class="lb bd" style="left:1337.667px;top:1065.05px">ACC_CALIBRATION_FAIL</span><span class="lb" style="left:1538.5px;top:1065.05px">Kalibrierung des Beschleunigungssensor im Flug fehlgeschlagen</span><i class="sp" style="left:1274.5px;width:57.667px;top:1088.05px"></i><i class="sp" style="left:1335px;width:197.833px;top:1088.05px"></i><i class="sp" style="left:1536px;width:749px;top:1088.05px"></i><span class="tg on" style="left:1276.833px;top:1097.767px"><i></i></span><span class="lb bd" style="left:1337.667px;top:1095.6px">READY_BEEP</span><span class="lb" style="left:1538.5px;top:1095.6px">Spiele einen Ton, wenn das GPS eine Position hat und bereit ist</span><i class="sp" style="left:1274.5px;width:57.667px;top:1118.6px"></i><i class="sp" style="left:1335px;width:197.833px;top:1118.6px"></i><i class="sp" style="left:1536px;width:749px;top:1118.6px"></i><span class="tg on" style="left:1276.833px;top:1128.317px"><i></i></span><span class="lb bd" style="left:1337.667px;top:1126.15px">DISARM_REPEAT</span><span class="lb" style="left:1538.5px;top:1126.15px">Piepst solange der Stick in disarm Position gehalten wird</span><i class="sp" style="left:1274.5px;width:57.667px;top:1149.15px"></i><i class="sp" style="left:1335px;width:197.833px;top:1149.15px"></i><i class="sp" style="left:1536px;width:749px;top:1149.15px"></i><span class="tg on" style="left:1276.833px;top:1158.867px"><i></i></span><span class="lb bd" style="left:1337.667px;top:1156.7px">ARMED</span><span class="lb" style="left:1538.5px;top:1156.7px">Warntöne, wenn das Board gearmt wurde (bis zum disarm oder Gas geben)</span><i class="sp" style="left:1274.5px;width:57.667px;top:1179.7px"></i><i class="sp" style="left:1335px;width:197.833px;top:1179.7px"></i><i class="sp" style="left:1536px;width:749px;top:1179.7px"></i>
</div>
<div id="scr"><svg style="top:6px" viewBox="0 0 5 3"><path d="M.4 2.800 L2.500 .4 L4.600 2.800Z" fill="#a3a3a3"/></svg><i></i><svg style="top:991.667px" viewBox="0 0 5 3"><path d="M.4 .2 L2.500 2.600 L4.600 .2Z" fill="#505050"/></svg></div>
<div id="tbar"><span id="save">Speichern und Neustarten</span></div>
<div id="st"><span style="left:10.5px">Port-Auslastung: D: 0 % U: 0 %</span><i style="left:180.667px"></i><span style="left:191px">Paket-Fehler: 0</span><i style="left:279.667px"></i><span style="left:290.5px">I2C-Fehler: 0</span><i style="left:368.667px"></i><span style="left:377.667px">Zykluszeit: 125</span><i style="left:464.5px"></i><span style="left:475px">CPU-Auslastung: 33 %</span><i style="left:1816.833px"></i><span style="left:1828.333px">Konfigurator: 10.9.0 (697943b) , Firmware: 4.4.2 BTFL , Ziel: HGLR/ZEUSF722_AIO(STM32F7X2)</span></div>
<i id="lb"></i><i id="rb"></i><i id="bb"></i>
</div>
</body></html>
